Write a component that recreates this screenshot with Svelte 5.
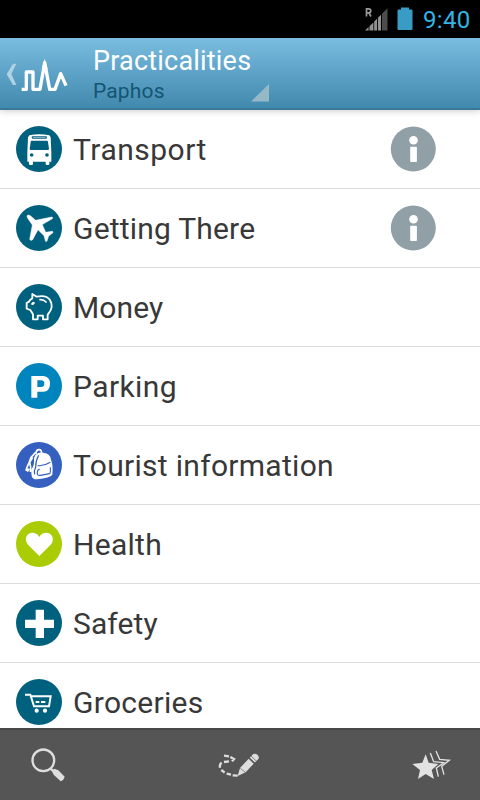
<script>
  const rows = [
    { label: 'Transport', icon: 'bus', color: '#00617f', box: '48 33 138 138', spacing: 0.5, info: true },
    { label: 'Getting There', icon: 'plane', color: '#00617f', box: '48 30 138 138', spacing: 0.2, info: true },
    { label: 'Money', icon: 'pig', color: '#00617f', box: '48 267 138 138', spacing: 0.1 },
    { label: 'Parking', icon: 'parking', color: '#0084bd', box: '48 39 138 138', spacing: 0.4 },
    { label: 'Tourist information', icon: 'bag', color: '#3560c0', box: '48 276 138 138', spacing: 0.3 },
    { label: 'Health', icon: 'heart', color: '#aacc05', box: '48 33 138 138', spacing: 0.3 },
    { label: 'Safety', icon: 'cross', color: '#00617f', box: '48 270 138 138', spacing: 0.1 },
    { label: 'Groceries', icon: 'cart', color: '#00617f', box: '48 42 138 138', spacing: 0.3 }
  ];
</script>

<div class="screen">
  <div class="status">
    <svg class="signal" width="24" height="24" viewBox="0 0 24 24">
      <path d="M1 23.5L4.6 20V23.5ZM5.5 19.2L9.4 15.4V23.5H5.5ZM10.2 14.5L13 11.7V23.5H10.2ZM13.9 10.8L17 7.7V23.5H13.9Z" fill="#929292" />
      <path d="M18 6.8L23.5 1.2V23.5H18Z" fill="#4c4c4c" />
      <path d="M2.5 9.5V1.8H4.7Q6.8 1.8 6.8 3.8T4.7 5.8H2.5M4.9 5.8L7 9.5" fill="none" stroke="#999" stroke-width="1.7" />
    </svg>
    <svg class="battery" width="16" height="24" viewBox="0 0 16 24">
      <path d="M4 .5H12V2.500H14.500Q15.500 2.500 15.500 3.500V22Q15.500 23 14.500 23H1.500Q.5 23 .5 22V3.500Q.5 2.500 1.500 2.500H4Z" fill="#399cc4" />
    </svg>
    <span class="clock">9:40</span>
  </div>

  <header>
    <svg class="brand" width="70" height="72" viewBox="0 0 210 216">
      <path d="M39 77H49L34 108L49 141H39L20 109Z" fill="#b1d2e4" />
      <path d="M65 154H79V102H99V154H120L134 74L149 154H165L182 107L198 143" fill="none" stroke="#fff" stroke-width="10" stroke-linejoin="round" />
      <path d="M125 94L134 62L143 94Z" fill="#fff" />
    </svg>
    <div class="titles">
      <div class="title">Practicalities</div>
      <div class="subtitle">Paphos</div>
    </div>
    <svg class="spinner" width="18" height="18" viewBox="0 0 18 18"><path d="M18 0V17.5H0Z" fill="#96b9c8" /></svg>
  </header>

  <main>
    {#each rows as row}
      <div class="row">
        <svg class="icon" width="46" height="46" viewBox={row.box} style:background={row.color} fill="#fff">
          {#if row.icon === 'bus'}
            <path fill-rule="evenodd" d="M88 61Q118 54 148 61L152 67L154 112V140H148V147Q148 150 144 150H141Q137 150 137 147V140H99V147Q99 150 95 150H91Q87 150 87 147V140H82V112L84 67ZM95 77Q92 77 92 81L89 102Q89 105 93 105H143Q147 105 147 102L144 81Q144 77 141 77ZM98 64Q95 64 95 67.500T98 71H138Q141 71 141 67.500T138 64Z" />
            <circle cx="95" cy="120" r="5.500" fill={row.color} /><circle cx="141" cy="120" r="5.500" fill={row.color} />
            <path d="M99 67.500H137" stroke="#fff" stroke-width="1.500" />
          {:else if row.icon === 'plane'}
            <path d="M82 61Q85 58 92 63L107 76L155 66Q160 67 157 71L128 88Q127 92 130 96L137 112L157 109Q161 110 158 114L146 123L141 138Q137 142 136 137L132 122L114 104L98 134Q92 139 89 133L97 90L84 71Q79 65 82 61Z" stroke="#fff" stroke-width="1.500" />
          {:else if row.icon === 'pig'}
            <path d="M97 310V297L110 305Q139 299 150 315Q162 336 146 355L143 359V373H129V362H113V373H99V358L91 345L80 341V324L87 320Q89 314 97 310Z" fill="none" stroke="#fff" stroke-width="5.500" stroke-linejoin="round" />
            <path d="M120 314Q131 313 138 321" fill="none" stroke="#fff" stroke-width="5" stroke-linecap="round" />
            <ellipse cx="99" cy="325" rx="6" ry="4" transform="rotate(-35 99 325)" />
          {:else if row.icon === 'parking'}
            <path fill-rule="evenodd" d="M94 78H130Q150 80 150 101Q150 124 129 125H112V143H94ZM112 91V111H124Q133 110 133 101T124 91Z" />
          {:else if row.icon === 'bag'}
            <path d="M108 312Q108 299 117 299T124 310" fill="none" stroke="#fff" stroke-width="5" />
            <path d="M107 307L93 322L86 341L79 356M98 322L89 337L92 352L91 366" fill="none" stroke="#fff" stroke-width="5" />
            <path d="M106 315Q116 306 130 308Q151 310 153 329Q160 345 157 374Q151 383 111 388Q98 389 95 378L93 359Q102 350 102 333Q101 323 106 315Z" />
            <path d="M116 316Q106 334 107 352Q101 362 104 373M113 347Q132 349 151 337M119 358Q111 358 112 372Q113 377 121 376L149 371Q152 370 151 352" fill="none" stroke={row.color} stroke-width="3.500" />
            <path d="M79 353L75 361L84 366L90 357Z" />
          {:else if row.icon === 'heart'}
            <path d="M118 138L84 104Q73 91 80 78Q88 66 103 69Q113 71 118 81Q124 70 134 69Q148 66 156 78Q163 92 152 104Z" />
          {:else if row.icon === 'cross'}
            <path d="M107 299H132V329H162V354H132V384H107V354H75V329H107Z" />
          {:else}
            <path d="M75 89H91L102 124H147L152 94H94" fill="none" stroke="#fff" stroke-width="6" />
            <path d="M107 111H118M123 111H136" stroke="#fff" stroke-width="6" />
            <circle cx="110" cy="137" r="6.300" /><circle cx="135" cy="137" r="6.300" />
          {/if}
        </svg>
        <span class="label" style:letter-spacing={row.spacing + 'px'}>{row.label}</span>
        {#if row.info}
          <svg class="info" width="46" height="46" viewBox="0 0 46 46">
            <circle cx="23.300" cy="23" r="22.500" fill="#919fa6" />
            <circle cx="23.500" cy="14.300" r="4.300" fill="#fff" />
            <rect x="20.200" y="20.800" width="6.700" height="15.200" rx=".8" fill="#fff" />
          </svg>
        {/if}
      </div>
    {/each}
  </main>

  <footer>
    <svg width="36" height="36" viewBox="90 244 108 108">
      <circle cx="130" cy="284" r="32.500" fill="none" stroke="#dedede" stroke-width="7" />
      <path d="M152 309L158 315" stroke="#dedede" stroke-width="7" />
      <path d="M155 315L163 309L175 314L194 333Q192 343 182 347L161 327Z" fill="#dedede" />
    </svg>
    <svg width="42" height="28" viewBox="58 78 126 84">
      <path d="M76 92L91 94M95 96L106 102L100 109M91 109L76 111M69 113Q62 117 64 128M68 135L78 143M84 146L97 149M102 151L117 152" fill="none" stroke="#dedede" stroke-width="7" />
      <path d="M117 153L124 129L150 101L165 116L141 142ZM153 98L163 88Q169 84 177 90Q183 97 179 102L168 113Z" fill="#dedede" />
      <path d="M157 93L174 109M152 98L169 114M125 130L140 142" stroke="#555" stroke-width="2" />
    </svg>
    <svg width="40" height="32" viewBox="640 70 120 96">
      <path d="M681 86L690 111L719 115L699 133L706 160L681 145L658 160L664 133L641 115L671 111Z" fill="#e2e2e2" />
      <path d="M695 82L705 108L735 111L713 127L719 153M712 76L723 101L752 104L729 122L736 147" fill="none" stroke="#e2e2e2" stroke-width="4" />
    </svg>
  </footer>
</div>

<style>
  :global(body) { margin: 0; overflow: hidden; }
  .screen {
    width: 480px; height: 800px; display: flex; flex-direction: column;
    overflow: hidden; background: #fff; font-family: Roboto, sans-serif;
  }
  .status {
    height: 38px; flex: none; box-sizing: border-box; padding: 0 10px 0 0;
    display: flex; align-items: center; justify-content: flex-end; background: #000;
  }
  .signal { margin-right: 9px; }
  .battery { margin-right: 10px; }
  .clock { width: 47px; padding-top: 2px; color: #33b5e5; font-size: 24px; letter-spacing: .3px; line-height: 36px; white-space: nowrap; }
  header {
    height: 72px; flex: none; box-sizing: border-box; display: flex; align-items: flex-start;
    background: linear-gradient(#7abde1, #4189ad);
    border-bottom: 2px solid #3a7898; box-shadow: 0 1px 7px #0003; z-index: 1;
  }
  .titles { margin-left: 23px; width: 158px; white-space: nowrap; }
  .title { color: #fff; font-size: 27px; letter-spacing: .2px; line-height: 32px; padding-top: 7px; }
  .subtitle { color: #145573; font-size: 21px; letter-spacing: .15px; line-height: 28px; }
  .spinner { margin-top: 46px; }
  main { flex: 1; min-height: 0; overflow: hidden; }
  .row {
    height: 79px; box-sizing: border-box; padding: 0 44px 0 16px; display: flex;
    align-items: center; border-bottom: 1px solid #dcdcdc;
  }
  .icon { flex: none; border-radius: 50%; }
  .label { flex: 1; margin-left: 11px; color: #383838; font-size: 30px; white-space: nowrap; }
  footer {
    height: 72px; flex: none; box-sizing: border-box; padding: 0 28px 0 30px;
    display: flex; align-items: center; justify-content: space-between;
    background: #555; border-top: 2px solid #484848;
  }
  footer svg { margin-top: -1px; }
</style>
